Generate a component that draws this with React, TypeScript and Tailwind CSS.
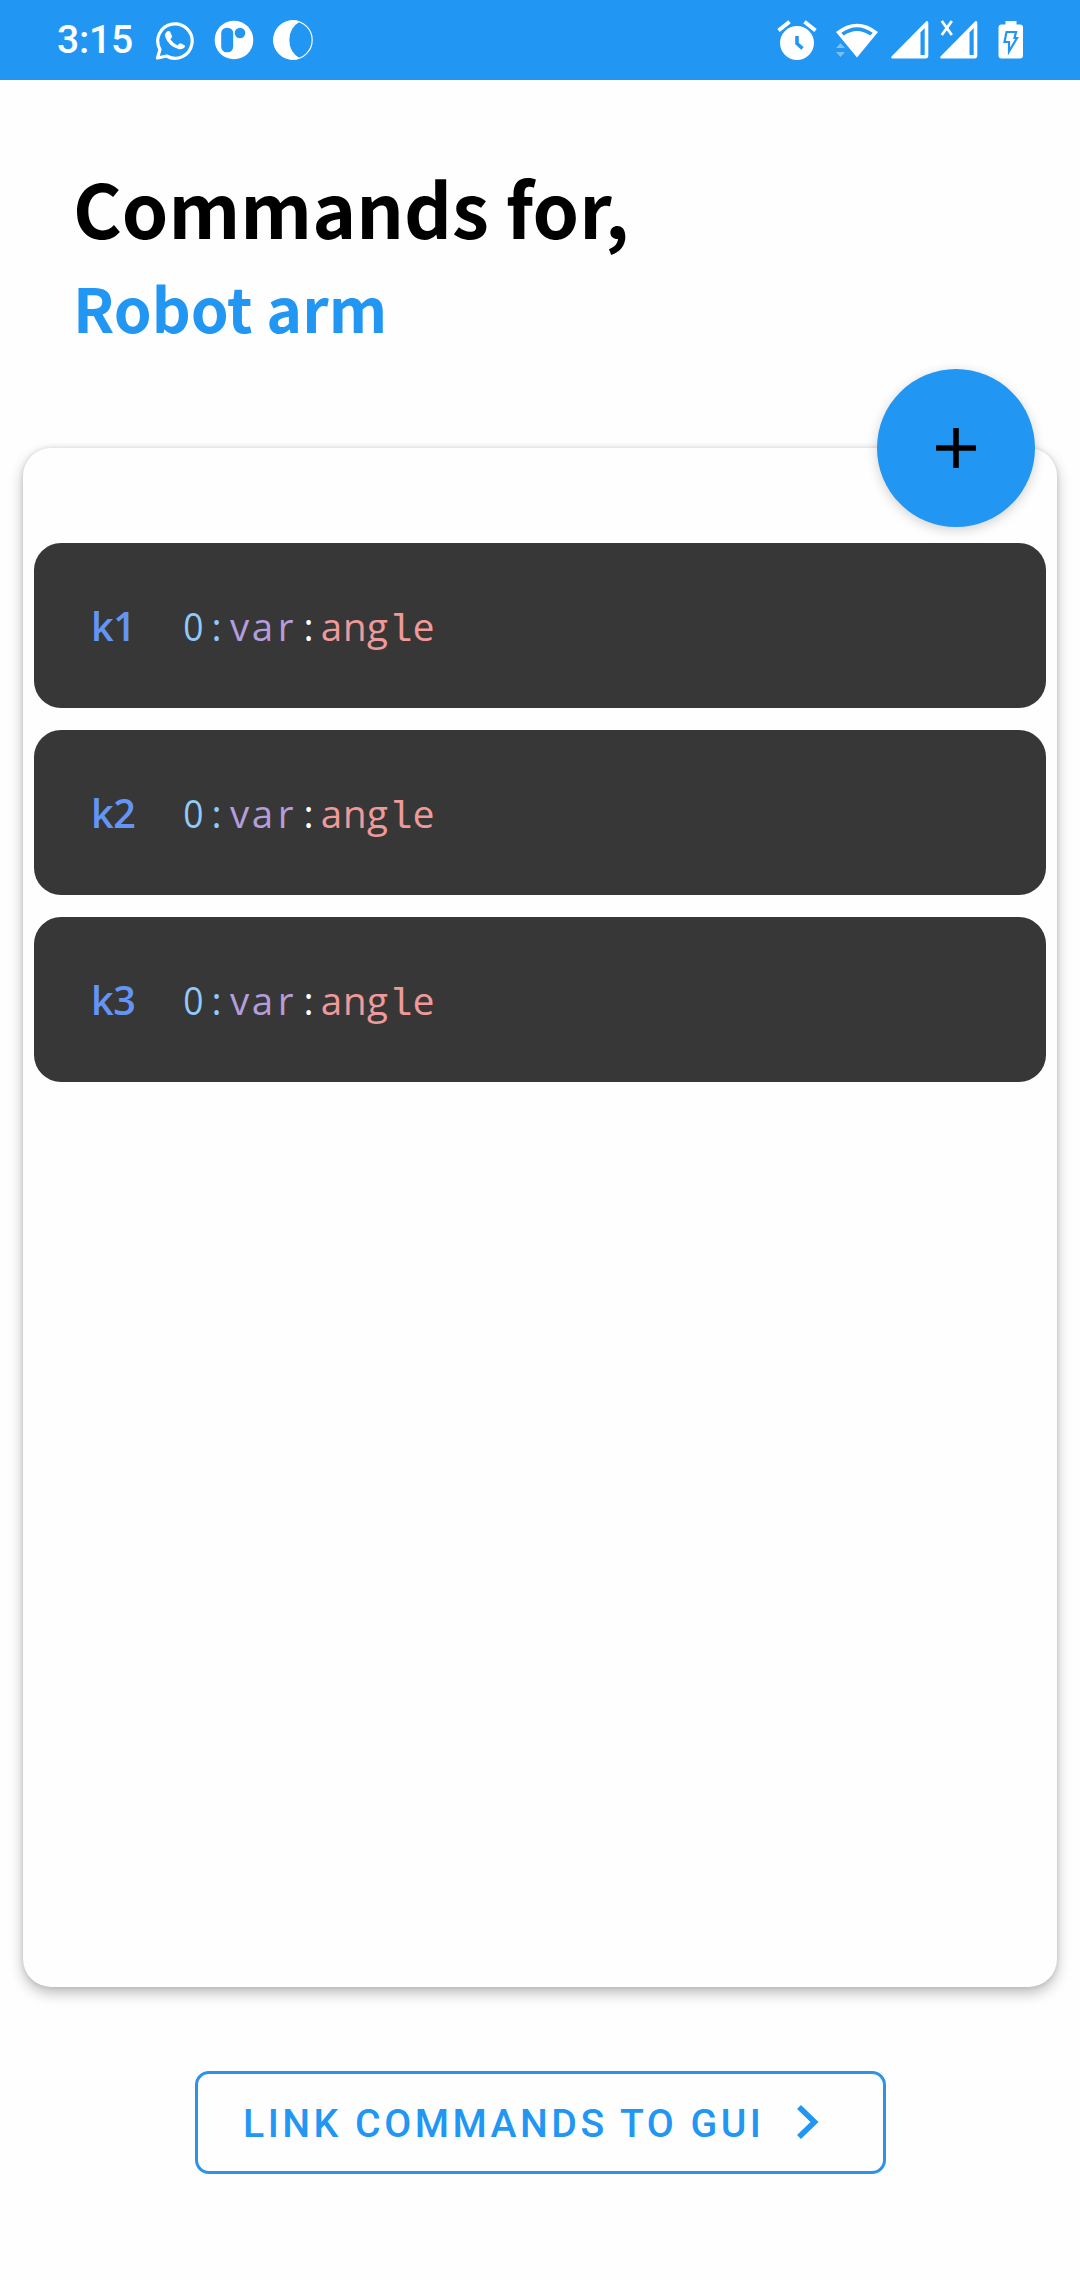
import React from "react";

function Cells({ text, color }: { text: string; color: string }) {
  return (
    <span className={color}>
      {text.split("").map((c, i) => (
        <span
          key={i}
          className={
            c === "l"
              ? "inline-block w-[23px] text-center font-['Liberation_Mono',monospace] text-[39px]"
              : c === "0"
                ? "inline-block w-[23px] scale-x-[0.92] text-center"
                : "inline-block w-[23px] text-center"
          }
        >
          {c}
        </span>
      ))}
    </span>
  );
}

function CommandRow({ name }: { name: string }) {
  return (
    <li className="flex h-[165px] items-center rounded-[27px] bg-[#373737] pl-[57px]">
      <span className="w-[91px] pt-px font-['Open_Sans',sans-serif] text-[39.5px] leading-[54px] font-semibold tracking-[-0.3px] text-[#6495f5]">
        {name}
      </span>
      <code className="pt-[5px] font-['Open_Sans',sans-serif] text-[38.5px] leading-[54px] font-[450] whitespace-nowrap">
        <Cells text="0:" color="text-[#90caf9]" />
        <Cells text="var" color="text-[#b39ddb]" />
        <Cells text=":" color="text-white" />
        <Cells text="angle" color="text-[#ef9a9a]" />
      </code>
    </li>
  );
}

function StatusBar() {
  return (
    <header className="flex h-20 items-center bg-[#2296f3] pl-[57px] text-white">
      <span className="w-[98px] font-['Roboto',sans-serif] text-[39px] leading-none font-medium tracking-[-0.2px]">3:15</span>
      <svg width="158" height="80" viewBox="155 0 158 80" fill="none">
        <path d="M157.5 58 L160 49.500 A17.200 17.200 0 1 1 166.500 56 Z" stroke="currentColor" strokeWidth="3.200" strokeLinejoin="round" />
        <path d="M167 31.500 Q169.500 30.300 170.500 32.500 L172 36 Q172.500 37.300 170.300 39.300 Q173.500 43.800 177.500 45.500 Q179.500 43 180.500 43.200 L184.500 45.200 Q185.500 46 184.500 47.500 Q182.500 49.700 179 49.200 Q168.500 46.500 165.200 36.800 Q164.800 33 167 31.500Z" fill="currentColor" />
        <circle cx="234" cy="40" r="19.300" fill="currentColor" />
        <rect x="221.200" y="27.700" width="12" height="24.600" rx="5.500" fill="#2296f3" />
        <circle cx="240" cy="33" r="5.300" fill="#2296f3" />
        <circle cx="293" cy="40" r="19.200" stroke="currentColor" strokeWidth="1.200" />
        <path d="M300 21.600 A19.700 19.700 0 1 0 300 58.400 A21.200 21.200 0 0 1 300 21.600Z" fill="currentColor" />
      </svg>
      <svg className="ml-auto" width="310" height="80" viewBox="770 0 310 80" fill="none">
        <circle cx="797" cy="43" r="17" fill="currentColor" />
        <path d="M778.500 30.500 L789.500 21.800 M815.500 30.500 L804.500 21.800" stroke="currentColor" strokeWidth="4" />
        <path d="M797 36 V43.500 L802.500 48.500" stroke="#2296f3" strokeWidth="3.600" />
        <path d="M836 32 Q857 15.500 878 32 L857 57.500Z" fill="currentColor" />
        <path d="M841.300 32.800 Q857 21.500 872.700 32.800 L870.300 35.500 Q857 26.500 843.700 35.500Z" fill="#2296f3" />
        <path d="M836 48 l4.500 -4.800 4.500 4.800z M836 52 l4.500 5 4.500 -5z" fill="#7cc0f8" />
        <path d="M926.500 21 Q928.300 20.500 928.300 23 V55.500 Q928.300 58.500 925.500 58.500 H892 Q890.500 58 891.500 56.500Z" fill="currentColor" />
        <path d="M920.500 32.500 L924.700 28 V55 H920.500Z" fill="#2296f3" />
        <path d="M975.500 21 Q977.300 20.500 977.300 23 V55.500 Q977.300 58.500 974.500 58.500 H941 Q939.500 58 940.500 56.500Z" fill="currentColor" />
        <path d="M969.500 32.500 L973.700 28 V55 H969.500Z" fill="#2296f3" />
        <path d="M941.800 21 L951.800 35 M951.800 21 L941.800 35" stroke="currentColor" strokeWidth="2.800" />
        <path d="M1005.500 21 h11 v3.500 h3.500 q3 0 3 3 v28 q0 3 -3 3 h-18.500 q-3 0 -3 -3 v-28 q0 -3 3 -3 h4z" fill="currentColor" />
        <path d="M1006.500 32 h9.500 l-1.500 6 h2.500 l-8 13.500 v-9.500 h-4.500z" stroke="#2296f3" strokeWidth="2.200" />
      </svg>
    </header>
  );
}

export default function App() {
  return (
    <main className="flex h-[2280px] w-[1080px] flex-col bg-[#fefefe]">
      <StatusBar />
      <section className="h-[368px] pt-[74px] pl-[73px] font-['Noto_Sans_CJK_SC',sans-serif] font-bold">
        <h1 className="text-[74.5px] leading-[106px] text-black">Commands for,</h1>
        <h2 className="mt-[2px] text-[60.7px] leading-[90px] text-[#2296f3]">Robot arm</h2>
      </section>
      <section className="relative mx-[23px] h-[1539px] rounded-[28px] bg-[#fefefe] px-[11px] pt-[95px] shadow-[0_6px_14px_rgba(0,0,0,0.26),0_0_5px_rgba(0,0,0,0.12)]">
        <button
          aria-label="Add command"
          className="absolute -top-[79px] right-[22px] grid size-[158px] place-items-center rounded-full bg-[#2296f3] shadow-[0_3px_12px_rgba(0,0,0,0.18)]"
        >
          <svg width="40" height="40" viewBox="0 0 40 40" stroke="black" strokeWidth="5.600">
            <path d="M20 0V40M0 20H40" />
          </svg>
        </button>
        <ul className="flex flex-col gap-[22px]">
          <CommandRow name="k1" />
          <CommandRow name="k2" />
          <CommandRow name="k3" />
        </ul>
      </section>
      <button className="mt-[84px] ml-[195px] flex h-[103px] w-[691px] items-center rounded-[14px] border-[3px] border-[#2e92e6] pl-[45px] text-[#2296f3]">
        <span className="w-[554px] pt-[5px] text-left font-['Roboto',sans-serif] text-[39.2px] leading-none font-medium tracking-[3.5px] whitespace-nowrap">
          LINK COMMANDS TO GUI
        </span>
        <svg className="-mt-px" width="22" height="36" viewBox="0 0 22 36" fill="none" stroke="currentColor" strokeWidth="5.600">
          <path d="M2 3L17.500 18L2 33" />
        </svg>
      </button>
    </main>
  );
}
